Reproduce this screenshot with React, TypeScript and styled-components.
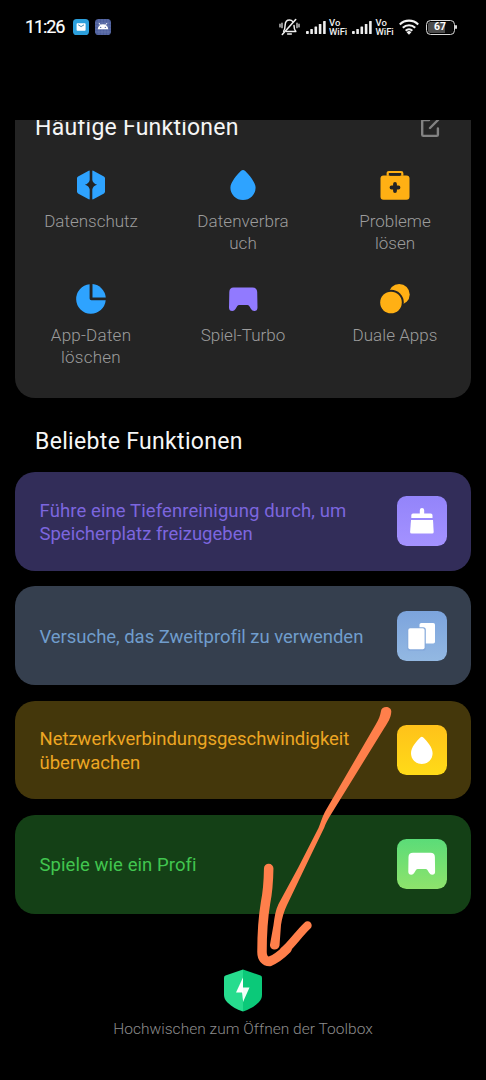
import React from "react";
import styled, { createGlobalStyle } from "styled-components";

const GlobalStyle = createGlobalStyle`
  * { box-sizing: border-box; }
  html, body { margin: 0; padding: 0; background: #000; }
  body { font-family: Roboto, "Liberation Sans", sans-serif; }
  svg { display: block; flex: none; }
`;

const Screen = styled.main`
  position: relative;
  width: 486px;
  height: 1080px;
  background: #000;
  overflow: hidden;
  display: flex;
  flex-direction: column;
`;

const StatusBar = styled.header`
  display: flex;
  align-items: center;
  justify-content: space-between;
  height: 54px;
  padding: 0 29px 0 25px;
  margin-bottom: 66px;
  flex: none;
`;

const StatusGroup = styled.div`
  display: flex;
  align-items: center;
`;

const Clock = styled.time`
  width: 48px;
  font-size: 18px;
  font-weight: 400;
  line-height: 20px;
  letter-spacing: -1.1px;
  color: #fff;
  -webkit-text-stroke: 0.2px #fff;
`;

const AppBadge = styled.svg`
  margin-right: 6px;
`;

const SignalSlot = styled.div`
  margin-left: 6px;
`;

const Carrier = styled.span`
  display: flex;
  flex-direction: column;
  width: 18.5px;
  margin: 0 4.5px 0 3.5px;
  font-size: 9.5px;
  line-height: 9.5px;
  font-weight: 500;
  letter-spacing: -0.1px;
  color: #eee;
  white-space: nowrap;
`;

const FunctionPanel = styled.section`
  flex: none;
  height: 278px;
  margin: 0 15px;
  background: #242424;
  border-radius: 0 0 20px 20px;
  overflow: hidden;
`;

const PanelHeader = styled.div`
  display: flex;
  justify-content: space-between;
  align-items: flex-start;
  height: 23px;
  padding: 0 31px 0 20px;

  svg {
    margin-top: -2px;
  }
`;

const Heading = styled.h2<{ $spacing: number; $leading: number }>`
  margin: 0;
  font-size: 23px;
  line-height: ${(p) => p.$leading}px;
  font-weight: 400;
  letter-spacing: ${(p) => p.$spacing}px;
  color: #f6f6f6;
  white-space: nowrap;
`;

const FunctionGrid = styled.div`
  display: grid;
  grid-template-columns: repeat(3, 152px);
  grid-auto-rows: 114px;
  padding-top: 26px;
`;

const FunctionItem = styled.div`
  display: flex;
  flex-direction: column;
  align-items: center;
`;

const FunctionLabel = styled.span<{ $spacing: number }>`
  margin-top: 9px;
  font-size: 17px;
  line-height: 22px;
  font-weight: 300;
  letter-spacing: ${(p) => p.$spacing}px;
  text-align: center;
  white-space: pre-line;
  color: #9c9c9c;
`;

const PopularTitle = styled.div`
  flex: none;
  padding: 29px 35px 15px;
`;

const CardList = styled.section`
  display: flex;
  flex-direction: column;
  gap: 15.5px;
  padding: 0 15px;
`;

const Card = styled.article<{ $bg: string; $fg: string }>`
  display: flex;
  align-items: center;
  justify-content: space-between;
  height: 98.8px;
  padding: 0 24.5px;
  border-radius: 20px;
  background: ${(p) => p.$bg};
  color: ${(p) => p.$fg};
`;

const CardText = styled.p`
  margin: 0;
  padding-top: 3.4px;
  font-size: 18.5px;
  line-height: 23.5px;
`;

const Line = styled.span<{ $spacing: number }>`
  display: block;
  letter-spacing: ${(p) => p.$spacing}px;
  white-space: nowrap;
`;

const Tile = styled.div<{ $from: string; $to: string }>`
  width: 50px;
  height: 50px;
  flex: none;
  border-radius: 9.5px;
  background: linear-gradient(${(p) => p.$from}, ${(p) => p.$to});
`;

const Footer = styled.footer`
  display: flex;
  flex-direction: column;
  align-items: center;
  padding-top: 55.3px;
`;

const FooterText = styled.span`
  margin-top: 6.5px;
  font-size: 15.5px;
  line-height: 22px;
  font-weight: 300;
  letter-spacing: 0.03px;
  color: #8c8c8c;
  white-space: nowrap;
`;

const Annotation = styled.svg`
  position: absolute;
  inset: 0;
  pointer-events: none;
`;

const MailBadge = () => (
  <AppBadge width="16" height="16" viewBox="0 0 16 16">
    <rect width="16" height="16" rx="3.6" fill="#2b9fdc" />
    <rect x="3.6" y="4.2" width="9" height="7.6" rx="0.8" fill="#fff" />
    <path d="M5.2 5.8 8.1 7.6l2.9-1.8" fill="none" stroke="#2b7fae" strokeWidth="0.9" />
  </AppBadge>
);

const AndroidBadge = () => (
  <AppBadge width="16" height="16" viewBox="0 0 16 16">
    <rect width="16" height="16" rx="3.6" fill="#4d5f9c" />
    <path d="M0 4h16M0 7h16M0 10h16M0 13h16M4 0v16M7 0v16M10 0v16M13 0v16" stroke="#7180b5" strokeWidth="0.6" />
    <path d="M2.8 10.2a5.2 5 0 0 1 10.4 0z" fill="#fff" />
    <path d="m4 4 1.6 2.3M12 4l-1.6 2.3" stroke="#fff" strokeWidth="0.9" />
    <circle cx="5.7" cy="8.4" r="0.6" fill="#4d5f9c" />
    <circle cx="10.3" cy="8.4" r="0.6" fill="#4d5f9c" />
  </AppBadge>
);

const BellOff = () => (
  <svg width="21" height="18" viewBox="0 0 21 18" fill="none" stroke="#eee" strokeLinecap="round" strokeLinejoin="round">
    <path d="M4.6 13.2C6 11.8 6 10 6.1 7.2 6.3 4 8 2 10.5 2c1.4 0 2.5.6 3.3 1.6M15 7.5c0 3 .2 4.4 1.8 5.9H7.5" strokeWidth="1.5" />
    <path d="M8.7 16h3.6" strokeWidth="1.6" />
    <path d="M3.3 16.5 16.7 1.5" strokeWidth="1.6" />
    <path d="M3 5.2v4.5M1 6.2V9M18 5.2v4.5M20 6.2V9" strokeWidth="1.2" />
  </svg>
);

const Signal = () => (
  <svg width="20" height="13" viewBox="0 0 20 13" fill="#eee">
    <rect x="0" y="10" width="2.8" height="3" rx="0.8" />
    <rect x="4.3" y="8" width="2.6" height="5" rx="0.6" />
    <rect x="8.5" y="5.5" width="2.6" height="7.5" rx="0.6" />
    <rect x="12.8" y="3" width="2.6" height="10" rx="0.6" />
    <rect x="17.1" y="0" width="2.6" height="13" rx="0.6" />
  </svg>
);

const Wifi = () => (
  <svg width="20" height="16" viewBox="0 0 20 16" fill="none" stroke="#f2f2f2" strokeWidth="2.1">
    <path d="M.8 5.4a13.2 13.2 0 0 1 18.4 0M3.8 8.7a9 9 0 0 1 12.4 0M6.7 11.7a4.8 4.8 0 0 1 6.6 0" />
    <path d="m10 15.7 2.4-2.5a3.5 3.5 0 0 0-4.8 0z" fill="#f2f2f2" stroke="none" />
  </svg>
);

const BatteryWrap = styled.div`
  display: flex;
  align-items: center;
  margin-left: 7px;
`;

const BatteryBody = styled.div`
  display: flex;
  align-items: center;
  justify-content: center;
  width: 29px;
  height: 15px;
  border: 1.5px solid #d8d8d8;
  border-radius: 4.5px;
  background: linear-gradient(90deg, #4c4c4c 66%, #0c0c0c 66%);
  box-shadow: inset 0 0 0 1px #000;
  font-size: 10.5px;
  line-height: 12px;
  font-weight: 700;
  color: #fff;
`;

const BatteryTip = styled.div`
  width: 1.8px;
  height: 4px;
  margin-left: 0.6px;
  background: #d8d8d8;
  border-radius: 1px;
`;

const EditIcon = () => (
  <svg width="20" height="20" viewBox="0 0 20 20" fill="none" stroke="#828282" strokeWidth="2.4" strokeLinecap="round" strokeLinejoin="round">
    <path d="M9 2H3.3Q2.2 2 2.2 3.2v13.5Q2.2 17.9 3.4 17.9h13.3q1.2 0 1.2-1.2V10.500" />
    <path d="m10 10 8-8" />
  </svg>
);

const PrivacyIcon = () => (
  <svg width="32" height="32" viewBox="0 0 32 32" fill="#2ea3ff">
    <path d="M14.7 2.2q0-1-1-.5L3.1 7.4Q2 8 2 9.3v13.3q0 1.2 1 1.8l10.7 5.9q1 .5 1-.6v-9.3q-.5-3.3-4.8-4.7 4.3-1.3 4.8-4.7z" />
    <path d="M17.3 2.2q0-1 1-.5l10.6 5.7Q30 8 30 9.3v13.3q0 1.2-1 1.8l-10.7 5.9q-1 .5-1-.6v-9.3q.5-3.3 4.8-4.7-4.3-1.3-4.8-4.7z" />
  </svg>
);

const DropIcon = () => (
  <svg width="32" height="32" viewBox="0 0 32 32">
    <path d="M13.800 2.100Q16 0 18.200 2.100C21.700 5.600 28.600 13.200 28.600 18.800A12.600 12.200 0 0 1 3.400 18.800C3.400 13.200 10.300 5.600 13.800 2.100Z" fill="#2ea3ff" />
  </svg>
);

const KitIcon = () => (
  <svg width="32" height="32" viewBox="0 0 32 32">
    <rect x="1.5" y="6.6" width="29" height="24.2" rx="3" fill="#ffb014" />
    <path d="M8.7 6.8V4.2q0-1.2 1.2-1.2h12.2q1.2 0 1.2 1.2v2.6" fill="none" stroke="#ffb014" strokeWidth="2.2" />
    <rect x="10.6" y="4.6" width="10.8" height="2.2" fill="#242424" />
    <path d="M16 15v7M12.5 18.5h7" stroke="#242424" strokeWidth="3.8" strokeLinecap="round" />
  </svg>
);

const PieIcon = () => (
  <svg width="32" height="32" viewBox="0 0 32 32" fill="#2ea3ff">
    <path d="M14.6 1.2A14.8 14.8 0 1 0 30.7 17.3H16.4q-1.8 0-1.8-1.8z" />
    <path d="M17.5 1.1A14.8 14.8 0 0 1 30.8 14.5H17.5z" />
  </svg>
);

const GamepadIcon = ({ color }: { color: string }) => (
  <svg width="32" height="32" viewBox="0 0 32 32">
    <path d="M6.500 4.500h19q4.500 0 4.700 4.500l.3 15.500q0 3.500-3.300 3.500-2 0-3.200-2l-1.800-3q-.7-1-1.900-1h-8.100q-1.200 0-1.900 1l-1.800 3q-1.200 2-3.200 2-3.300 0-3.300-3.500L2.300 9q.2-4.500 4.200-4.500z" fill={color} />
  </svg>
);

const DualIcon = () => (
  <svg width="32" height="32" viewBox="0 0 32 32">
    <circle cx="20.2" cy="11.4" r="10.5" fill="#ffb014" />
    <circle cx="12" cy="19.5" r="12.8" fill="#242424" />
    <circle cx="12" cy="19.5" r="10.8" fill="#ffb014" />
  </svg>
);

const BrushGlyph = () => (
  <svg width="50" height="50" viewBox="0 0 50 50" fill="#fff">
    <path d="M22.800 17.500v-3.200a2.200 2.200 0 0 1 4.400 0v3.200h6.600q1.700 0 1.700 1.700v2.700H14.300v-2.700q0-1.700 1.700-1.700z" />
    <path d="M14 24h22l.7 12q0 1.500-1.500 1.500H14.600q-1.500 0-1.500-1.500z" />
  </svg>
);

const PagesGlyph = () => (
  <svg width="50" height="50" viewBox="0 0 50 50" fill="#fff">
    <rect x="22.5" y="12" width="15.5" height="20.5" rx="1.8" />
    <rect x="10.3" y="16.2" width="18.5" height="23.5" rx="2.5" fill="#84a9db" />
    <rect x="11.3" y="17.2" width="16.3" height="21" rx="1.8" />
  </svg>
);

const DropGlyph = () => (
  <svg width="50" height="50" viewBox="0 0 50 50" fill="#fff">
    <path d="M23.600 12.300q1.200-1.300 2.400 0c4 4 9.600 10 9.600 16A10.800 10.800 0 0 1 14 28.300c0-6 5.600-12 9.600-16z" />
  </svg>
);

const PadGlyph = () => (
  <svg width="50" height="50" viewBox="0 0 50 50" fill="#fff">
    <path d="M16 13.700h17.500q4.200 0 4.400 4.200l.2 14.500q0 3.300-3 3.300-1.900 0-3-1.900l-1.700-2.800q-.6-1-1.800-1h-7.800q-1.200 0-1.800 1l-1.700 2.800q-1.100 1.900-3 1.900-3 0-3-3.300l.2-14.500q.2-4.200 4.500-4.200z" />
  </svg>
);

const ShieldIcon = () => (
  <svg width="38" height="43" viewBox="0 0 38 43">
    <path d="M19 .5 1.500 6.600Q0 7.200 0 8.800V26q0 4 3.500 7.500C8 38 13.500 40.500 17.500 42.100q.8.300 1.500.3z" fill="#27dc8e" />
    <path d="m19 .5 17.500 6.100Q38 7.200 38 8.800V26q0 4-3.500 7.500C30 38 24.500 40.500 20.500 42.100q-.8.300-1.500.3z" fill="#0bc979" />
    <path d="M19 8.500 12 23.500h7z" fill="#fff" />
    <path d="M19 8.500v10h6.500L19 33z" fill="#f0fff7" />
    <path d="M18 23h1.200v10z" fill="#fff" />
  </svg>
);

const functions = [
  { label: "Datenschutz", spacing: 0, icon: <PrivacyIcon /> },
  { label: "Datenverbra\nuch", spacing: 0.1, icon: <DropIcon /> },
  { label: "Probleme\nlösen", spacing: 0, icon: <KitIcon /> },
  { label: "App-Daten\nlöschen", spacing: 0.25, icon: <PieIcon /> },
  { label: "Spiel-Turbo", spacing: 0.05, icon: <GamepadIcon color="#917aff" /> },
  { label: "Duale Apps", spacing: 0.05, icon: <DualIcon /> },
];

const cards = [
  {
    lines: [
      { text: "Führe eine Tiefenreinigung durch, um", spacing: 0.1 },
      { text: "Speicherplatz freizugeben", spacing: 0 },
    ],
    bg: "#322d59", fg: "#7c66df", from: "#9384fa", to: "#a492ff", glyph: <BrushGlyph />,
  },
  {
    lines: [{ text: "Versuche, das Zweitprofil zu verwenden", spacing: -0.04 }],
    bg: "#353f4e", fg: "#709dcc", from: "#7ca4dd", to: "#93b8e2", glyph: <PagesGlyph />,
  },
  {
    lines: [
      { text: "Netzwerkverbindungsgeschwindigkeit", spacing: -0.05 },
      { text: "überwachen", spacing: 0 },
    ],
    bg: "#44370b", fg: "#eda623", from: "#ffc21a", to: "#ffdb18", glyph: <DropGlyph />,
  },
  {
    lines: [{ text: "Spiele wie ein Profi", spacing: 0.07 }],
    bg: "#144016", fg: "#41c64f", from: "#5bdc78", to: "#8ee36c", glyph: <PadGlyph />,
  },
];

export default function App() {
  return (
    <>
      <GlobalStyle />
      <Screen>
        <StatusBar>
          <StatusGroup>
            <Clock>11:26</Clock>
            <MailBadge />
            <AndroidBadge />
          </StatusGroup>
          <StatusGroup>
            <BellOff />
            <SignalSlot><Signal /></SignalSlot>
            <Carrier><span>Vo</span><span>WiFi</span></Carrier>
            <Signal />
            <Carrier><span>Vo</span><span>WiFi</span></Carrier>
            <Wifi />
            <BatteryWrap>
              <BatteryBody>67</BatteryBody>
              <BatteryTip />
            </BatteryWrap>
          </StatusGroup>
        </StatusBar>

        <FunctionPanel>
          <PanelHeader>
            <Heading $spacing={0.24} $leading={16}>Häufige Funktionen</Heading>
            <EditIcon />
          </PanelHeader>
          <FunctionGrid>
            {functions.map((f) => (
              <FunctionItem key={f.label}>
                {f.icon}
                <FunctionLabel $spacing={f.spacing}>{f.label}</FunctionLabel>
              </FunctionItem>
            ))}
          </FunctionGrid>
        </FunctionPanel>

        <PopularTitle>
          <Heading $spacing={0.33} $leading={30}>Beliebte Funktionen</Heading>
        </PopularTitle>

        <CardList>
          {cards.map((c) => (
            <Card key={c.bg} $bg={c.bg} $fg={c.fg}>
              <CardText>
                {c.lines.map((l) => (
                  <Line key={l.text} $spacing={l.spacing}>{l.text}</Line>
                ))}
              </CardText>
              <Tile $from={c.from} $to={c.to}>{c.glyph}</Tile>
            </Card>
          ))}
        </CardList>

        <Footer>
          <ShieldIcon />
          <FooterText>Hochwischen zum Öffnen der Toolbox</FooterText>
        </Footer>

        <Annotation width="486" height="1080" viewBox="0 0 486 1080">
          <path
            d="M381 711C381.500 705.500 391.500 705.500 391.300 711.700C391 718 387.500 723 384.300 728L330 816C327.500 820 325.800 823.500 324.300 827.500L310 857L287 905C284 911 282 918 281 925L279.500 945.500C278.500 951.500 269.500 950.500 270 944.500L273.500 925C274.500 917 275.500 910 278.500 904L298 868L318.500 828C320.500 823 322 817.500 325 811.700L376 724C379 719 380 716 381 711Z"
            fill="#ff7f4b"
          />
          <path
            d="M268.700 868.500C268.500 882 267.500 893 265.500 903C263 918 262 936 262 952C262 958 265 961.500 269.500 961.500C276 959 282 954 287 949"
            fill="none" stroke="#ff7f4b" strokeWidth="9.500" strokeLinecap="round" strokeLinejoin="round"
          />
          <path d="M284 951C292 944 299 933.500 307.500 925.500" fill="none" stroke="#ff7f4b" strokeWidth="8.400" strokeLinecap="round" />
        </Annotation>
      </Screen>
    </>
  );
}
